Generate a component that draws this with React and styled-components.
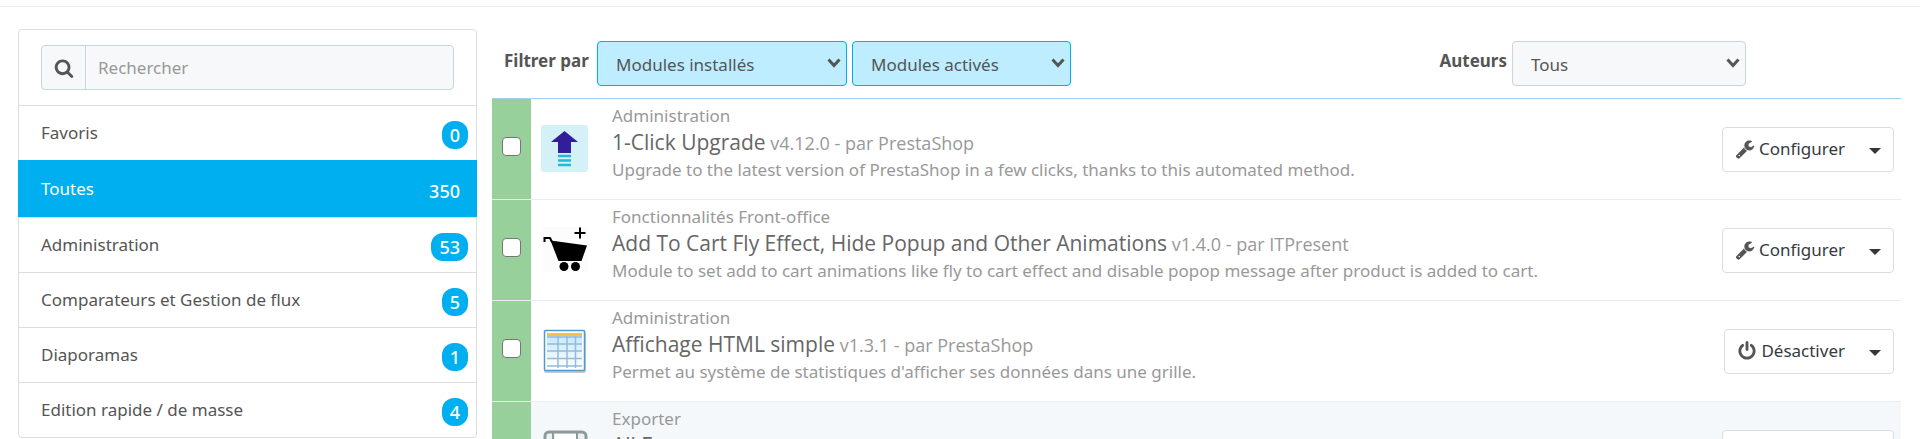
import React from "react";
import styled, { createGlobalStyle, css } from "styled-components";

const GlobalStyle = createGlobalStyle`
  *, *::before, *::after { box-sizing: border-box; }
  body {
    margin: 0;
    background: #fff;
    color: #555;
    font-family: "Noto Sans", "Open Sans", sans-serif;
    font-size: 17px;
    line-height: 24px;
    overflow: hidden;
  }
  button, input, select { font: inherit; color: inherit; margin: 0; }
`;

const Page = styled.div`
  height: 100vh;
  overflow: hidden;
  padding-top: 6px;
`;

const Panel = styled.main`
  display: flex;
  align-items: flex-start;
  gap: 15px;
  padding: 22px 19px 0 18px;
  border-top: 1px solid #eee;
`;

const Sidebar = styled.nav`
  flex: 0 0 459px;
  border: 1px solid #ddd;
  border-radius: 4px;
`;

const SearchBox = styled.form`
  display: flex;
  height: 45px;
  margin: 15px 22px;
  border: 1px solid #c7d6db;
  border-radius: 4px;
  background: #f6f8fa;
  overflow: hidden;
`;

const SearchButton = styled.button`
  display: grid;
  place-items: center;
  width: 44px;
  padding: 0;
  border: 0;
  border-right: 1px solid #c7d6db;
  background: transparent;
`;

const SearchInput = styled.input`
  flex: 1;
  min-width: 0;
  padding: 0 12px;
  border: 0;
  outline: 0;
  background: transparent;
  &::placeholder { color: #999; opacity: 1; }
`;

const Glyph = styled.svg`
  display: block;
  width: 20px;
  height: 20px;
  fill: #555;
`;

const CategoryList = styled.ul`
  margin: 0;
  padding: 0;
  list-style: none;
`;

const CategoryLink = styled.a`
  display: flex;
  align-items: center;
  justify-content: space-between;
  height: 55px;
  padding: 0 8px 0 22px;
  border-top: 1px solid #ddd;
  color: #555;
  text-decoration: none;
  ${(p) => p.$active && css`
    height: 57px;
    margin: 0 -1px;
    padding: 0 9px 0 23px;
    border-color: #00aff0;
    background: #00aff0;
    color: #fff;
  `}
`;

const Badge = styled.span`
  min-width: 25px;
  margin-top: 4px;
  padding: 2px 8px;
  border-radius: 12px;
  background: #00aff0;
  color: #fff;
  font-size: 18px;
  font-weight: 500;
  text-align: center;
`;

const Content = styled.section`
  flex: 1;
  min-width: 0;
`;

const FilterBar = styled.div`
  display: flex;
  align-items: center;
  gap: 5px;
  padding: 12px 155px 12px 12px;
`;

const FilterLabel = styled.label`
  min-width: 88px;
  padding-bottom: 6px;
  font-weight: 700;
  ${(p) => p.$end && css`
    margin-left: auto;
    text-align: right;
  `}
`;

const SelectWrap = styled.span`
  position: relative;
  width: ${(p) => p.$width}px;
`;

const Select = styled.select`
  display: block;
  appearance: none;
  width: 100%;
  height: 45px;
  padding: 3px 36px 0 18px;
  border: 1px solid ${(p) => (p.$active ? "#00aff0" : "#c7d6db")};
  border-radius: 4px;
  background: ${(p) => (p.$active ? "#beedff" : "#f6f8fa")};
`;

const SelectArrow = styled.svg`
  position: absolute;
  top: 17px;
  right: 6px;
  width: 14px;
  height: 10px;
  pointer-events: none;
`;

const ModuleTable = styled.table`
  width: 100%;
  border-collapse: separate;
  border-spacing: 0;
  border-top: 1px solid #a0d0eb;
`;

const ModuleRow = styled.tr`
  background: ${(p) => (p.$shaded ? "#f4f8fb" : "#fff")};
`;

const Cell = styled.td`
  padding: 0;
  border-bottom: 1px solid #eaedef;
  vertical-align: middle;
`;

const CheckCell = styled(Cell)`
  width: 39px;
  background: #97d09a;
`;

const Checkbox = styled.input`
  display: block;
  appearance: none;
  width: 19px;
  height: 19px;
  margin: 0 auto 6px;
  border: 1px solid #767676;
  border-radius: 4px;
  background: #fff;
`;

const IconCell = styled(Cell)`
  width: 81px;
  padding-left: 10px;
  svg { display: block; width: 48px; height: 48px; }
`;

const InfoCell = styled(Cell)`
  padding: 3px 0 16px;
  color: #999;
  line-height: 27px;
`;

const ModuleTitle = styled.div`
  height: 27px;
  font-family: "Open Sans", sans-serif;
  font-size: 18px;
`;

const ModuleName = styled.span`
  color: #666;
  font-size: 21px;
`;

const ActionCell = styled(Cell)`
  width: 200px;
  padding-right: 7px;
`;

const ButtonGroup = styled.div`
  display: flex;
  width: max-content;
  height: 45px;
  margin-left: auto;
  border: 1px solid #ddd;
  border-radius: 4px;
  background: #fff;
`;

const ActionButton = styled.button`
  display: flex;
  align-items: center;
  gap: 4px;
  padding: 0 12px;
  border: 0;
  background: transparent;
  color: #363a41;
`;

const MenuButton = styled.button`
  display: grid;
  place-items: center;
  width: 36px;
  padding: 3px 0 0;
  border: 0;
  background: transparent;
`;

const Caret = styled.span`
  border: 6px solid transparent;
  border-top-color: #363636;
  border-bottom: 0;
`;

const categories = [
  ["Favoris", 0],
  ["Toutes", 350],
  ["Administration", 53],
  ["Comparateurs et Gestion de flux", 5],
  ["Diaporamas", 1],
  ["Edition rapide / de masse", 4],
];

const SearchIcon = () => (
  <Glyph viewBox="0 0 1792 1792" aria-hidden="true">
    <path d="M1216 832q0-185-131.500-316.500t-316.500-131.500-316.500 131.500-131.500 316.500 131.500 316.500 316.500 131.500 316.500-131.500 131.500-316.500zm512 832q0 52-38 90t-90 38q-54 0-90-38l-343-342q-179 124-399 124-143 0-273.500-55.500t-225-150-150-225-55.500-273.500 55.500-273.500 150-225 225-150 273.500-55.500 273.500 55.500 225 150 150 225 55.500 273.500q0 220-124 399l343 343q37 37 37 90z" />
  </Glyph>
);

const WrenchIcon = () => (
  <Glyph viewBox="0 0 1792 1792" aria-hidden="true">
    <path d="M448 1472q0-26-19-45t-45-19-45 19-19 45 19 45 45 19 45-19 19-45zm644-420l-682 682q-37 37-90 37-52 0-91-37l-106-108q-38-36-38-90 0-53 38-91l681-681q39 98 114.500 173.500t173.500 114.500zm634-435q0 39-23 106-47 134-164.500 217.500t-258.500 83.500q-185 0-316.500-131.500t-131.500-316.500 131.500-316.500 316.500-131.500q58 0 121.500 16.500t107.500 46.500q16 11 16 28t-16 28l-293 169v224l193 107q5-3 79-48.500t135.500-81 70.500-35.500q15 0 23.500 10t8.500 25z" />
  </Glyph>
);

const PowerIcon = () => (
  <Glyph viewBox="0 0 1792 1792" aria-hidden="true">
    <path d="M1664 896q0 156-61 298t-164 245-245 164-298 61-298-61-245-164-164-245-61-298q0-182 80.500-343t226.500-270q43-32 95.500-25t83.500 50q32 42 24.500 94.500t-49.500 84.500q-98 74-151.500 181t-53.500 228q0 104 40.500 198.500t109.500 163.500 163.500 109.500 198.500 40.500 198.500-40.500 163.500-109.500 109.500-163.500 40.500-198.500q0-121-53.500-228t-151.500-181q-42-32-49.500-84.500t24.500-94.500q31-43 84-50t95 25q146 109 226.500 270t80.500 343zm-640-768v640q0 52-38 90t-90 38-90-38-38-90v-640q0-52 38-90t90-38 90 38 38 90z" />
  </Glyph>
);

const UpgradeIcon = () => (
  <svg viewBox="0 0 48 48" aria-hidden="true">
    <rect width="47" height="47" x="0" y="0" rx="3" fill="#d3f1f7" />
    <path d="M23.500 6 37 17H30V28H17V17H10Z" fill="#321e9b" />
    <path d="M17 31h13M17 35.500h13M17 40h13" stroke="#25b9d7" strokeWidth="2.500" />
  </svg>
);

const CartIcon = () => (
  <svg viewBox="0 0 48 48" aria-hidden="true">
    <rect x="2" y="1" width="45" height="45" fill="#fcfcfc" />
    <path d="M3.500 16v-4h5.500l2 4" fill="none" stroke="#000" strokeWidth="2" />
    <path d="M9.500 14.500 46 19.500 40.500 35H17.500Z" fill="#000" />
    <circle cx="23" cy="40.500" r="4.500" /><circle cx="34.500" cy="40.500" r="4.500" />
    <path d="M39 1.500v11M33.500 7h11" stroke="#000" strokeWidth="2" />
  </svg>
);

const GridIcon = () => (
  <svg viewBox="0 0 48 48" aria-hidden="true">
    <defs>
      <linearGradient id="sheet" x1="0" y1="0" x2="0" y2="1">
        <stop offset="0" stopColor="#bfe6fa" /><stop offset="1" stopColor="#fff" />
      </linearGradient>
    </defs>
    <rect x="3" y="4" width="42" height="42" rx="2" fill="#c3c9ce" />
    <rect x="3.500" y="3.500" width="40" height="40" rx="1" fill="#fff" stroke="#4d9ccc" strokeWidth="1.500" />
    <rect x="6" y="6" width="35" height="35" fill="url(#sheet)" />
    <path d="M6 10h35M6 17h35M6 24h35M6 31.500h35M6 39h35M17 6v35M26 6v35M34.500 6v35" stroke="#94bbda" strokeWidth="1.500" />
    <rect x="6" y="6" width="35" height="3" fill="#fdbf45" />
  </svg>
);

const ExportIcon = () => (
  <svg viewBox="0 0 48 48" aria-hidden="true">
    <rect x="4" y="4" width="41" height="41" rx="4" fill="#eef1f1" stroke="#8d9a9c" strokeWidth="3" />
    <path d="M12 5v40M36 5v40" stroke="#8d9a9c" strokeWidth="2" />
    <rect x="14" y="6" width="21" height="38" fill="#fff" />
  </svg>
);

const modules = [
  { category: "Administration", name: "1-Click Upgrade", meta: "v4.12.0 - par PrestaShop", text: "Upgrade to the latest version of PrestaShop in a few clicks, thanks to this automated method.", Icon: UpgradeIcon },
  { category: "Fonctionnalités Front-office", name: "Add To Cart Fly Effect, Hide Popup and Other Animations", meta: "v1.4.0 - par ITPresent", text: "Module to set add to cart animations like fly to cart effect and disable popop message after product is added to cart.", Icon: CartIcon },
  { category: "Administration", name: "Affichage HTML simple", meta: "v1.3.1 - par PrestaShop", text: "Permet au système de statistiques d'afficher ses données dans une grille.", Icon: GridIcon, disable: true },
  { category: "Exporter", name: "All E", meta: "", text: "\u00a0", Icon: ExportIcon, shaded: true },
];

const FilterSelect = ({ id, width, active, children }) => (
  <SelectWrap $width={width}>
    <Select id={id} $active={active}><option>{children}</option></Select>
    <SelectArrow viewBox="0 0 14 10" aria-hidden="true">
      <path d="M1.500 1.500 7 7.500 12.500 1.500" fill="none" stroke="#555" strokeWidth="3" />
    </SelectArrow>
  </SelectWrap>
);

export default function App() {
  return (
    <Page>
      <GlobalStyle />
      <Panel>
        <Sidebar>
          <SearchBox onSubmit={(e) => e.preventDefault()}>
            <SearchButton type="submit" aria-label="Rechercher"><SearchIcon /></SearchButton>
            <SearchInput type="text" placeholder="Rechercher" aria-label="Rechercher" />
          </SearchBox>
          <CategoryList>
            {categories.map(([name, count]) => (
              <li key={name}>
                <CategoryLink href="#" $active={name === "Toutes"}>{name}<Badge>{count}</Badge></CategoryLink>
              </li>
            ))}
          </CategoryList>
        </Sidebar>
        <Content>
          <FilterBar>
            <FilterLabel htmlFor="installed">Filtrer par</FilterLabel>
            <FilterSelect id="installed" width={250} active>Modules installés</FilterSelect>
            <FilterSelect id="enabled" width={219} active>Modules activés</FilterSelect>
            <FilterLabel htmlFor="authors" $end>Auteurs</FilterLabel>
            <FilterSelect id="authors" width={234}>Tous</FilterSelect>
          </FilterBar>
          <ModuleTable>
            <tbody>
              {modules.map((m) => (
                <ModuleRow key={m.name} $shaded={m.shaded}>
                  <CheckCell><Checkbox type="checkbox" aria-label={m.name} /></CheckCell>
                  <IconCell><m.Icon /></IconCell>
                  <InfoCell>
                    <div>{m.category}</div>
                    <ModuleTitle><ModuleName>{m.name}</ModuleName> {m.meta}</ModuleTitle>
                    <div>{m.text}</div>
                  </InfoCell>
                  <ActionCell>
                    <ButtonGroup>
                      <ActionButton type="button">
                        {m.disable ? <PowerIcon /> : <WrenchIcon />}
                        {m.disable ? "Désactiver" : "Configurer"}
                      </ActionButton>
                      <MenuButton type="button" aria-label="Plus d'actions"><Caret /></MenuButton>
                    </ButtonGroup>
                  </ActionCell>
                </ModuleRow>
              ))}
            </tbody>
          </ModuleTable>
        </Content>
      </Panel>
    </Page>
  );
}
